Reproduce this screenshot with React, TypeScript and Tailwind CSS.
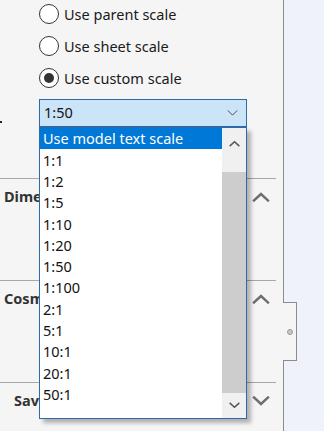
import React from "react";

const font = { fontFamily: '"Noto Sans", "Open Sans", sans-serif' };

const scaleOptions = [
  "Use model text scale",
  "1:1",
  "1:2",
  "1:5",
  "1:10",
  "1:20",
  "1:50",
  "1:100",
  "2:1",
  "5:1",
  "10:1",
  "20:1",
  "50:1",
];

const Chevron = ({ up, className }: { up?: boolean; className?: string }) => (
  <svg viewBox="0 0 18 10" className={className} fill="none" stroke="currentColor" strokeWidth="2.4" strokeLinecap="square">
    <path d={up ? "M2 8.5 L9 2 L16 8.5" : "M2 1.5 L9 8 L16 1.5"} />
  </svg>
);

const Radio = ({ label, checked }: { label: string; checked?: boolean }) => (
  <div className="flex items-center h-[28px] gap-[5px]">
    <span className="flex items-center justify-center w-[20px] h-[20px] rounded-full border border-[#333] bg-white">
      {checked && <span className="w-[10px] h-[10px] rounded-full bg-[#333]" />}
    </span>
    <span className="text-[14.5px] text-[#1a1a1a] leading-none">{label}</span>
  </div>
);

// titles are partly hidden behind the open dropdown, so clip them at its left edge
const Section = ({ title, up, indent }: { title: string; up?: boolean; indent?: boolean }) => (
  <div className="h-[102px] mr-[7px] border-t border-[#a8a8a8]">
    <div className="flex items-center justify-between h-[36px] pr-[6px]">
      <strong
        className={`${indent ? "ml-[14px] w-[25px]" : "ml-[4px] w-[35px]"} overflow-hidden whitespace-nowrap text-[14.5px] font-bold text-[#333]`}
      >
        {title}
      </strong>
      <Chevron up={up} className="w-[18px] h-[10px] text-[#6e6e6e]" />
    </div>
  </div>
);

export default function App() {
  return (
    <div className="relative flex w-[324px] h-[431px] overflow-hidden bg-[#eff2fa]" style={font}>
      <div className="w-[284px] h-full bg-[#f5f5f5] border-r border-[#8c8c8c] shrink-0">
        <div className="flex flex-col gap-[4px] pl-[39px]">
          <Radio label="Use parent scale" />
          <Radio label="Use sheet scale" />
          <Radio label="Use custom scale" checked />
        </div>
        <div className="flex items-center mt-[7px]">
          <span className="w-[2px] h-[2px] bg-[#222] mt-[18px]" />
          <div className="flex items-center justify-between ml-[37px] w-[208px] h-[28px] bg-[#cce4f7] border border-[#2c6aa8] pl-[4px] pr-[8px]">
            <span className="text-[14.5px] text-[#111]">1:50</span>
            <svg viewBox="0 0 12 7" className="w-[11px] h-[6px]" fill="none" stroke="#444" strokeWidth="1.1">
              <path d="M0.5 0.5 L6 6 L11.5 0.5" />
            </svg>
          </div>
        </div>
        <div className="mt-[51px]">
          <Section title="Dimensions" up />
          <Section title="Cosmetics" up />
          <Section title="Saved views" indent />
        </div>
      </div>

      {/* splitter handle */}
      <div className="absolute left-[283px] top-[302px] w-[14px] h-[59px] bg-[#f5f5f5] border-y border-r border-[#8c8c8c] flex items-center justify-center">
        <span className="w-[6px] h-[6px] rounded-full border border-[#9a9a9a] bg-[#c8c8c8]" />
      </div>

      {/* open dropdown list */}
      <div className="absolute left-[39px] top-[127px] w-[208px] h-[292px] flex bg-white border border-[#2c6aa8] shadow-[4px_4px_4px_rgba(0,0,0,0.28)]">
        <div className="flex-1 flex flex-col">
          {scaleOptions.map((o, i) => (
            <div
              key={`scale_opt_${i}`}
              className={`flex items-center h-[21.3px] pl-[3px] text-[14.5px] leading-none ${
                i === 0 ? "bg-[#0078d7] text-white" : "text-[#111]"
              }`}
            >
              {o}
            </div>
          ))}
        </div>
        <div className="w-[24px] flex flex-col bg-[#f0f0f0]">
          <div className="flex items-center justify-center h-[30px]">
            <Chevron up className="w-[11px] h-[7px] text-[#555]" />
          </div>
          <div className="h-[14px]" />
          <div className="h-[221px] bg-[#cdcdcd]" />
          <div className="flex-1 flex items-center justify-center">
            <Chevron className="w-[11px] h-[7px] text-[#555]" />
          </div>
        </div>
      </div>
    </div>
  );
}
